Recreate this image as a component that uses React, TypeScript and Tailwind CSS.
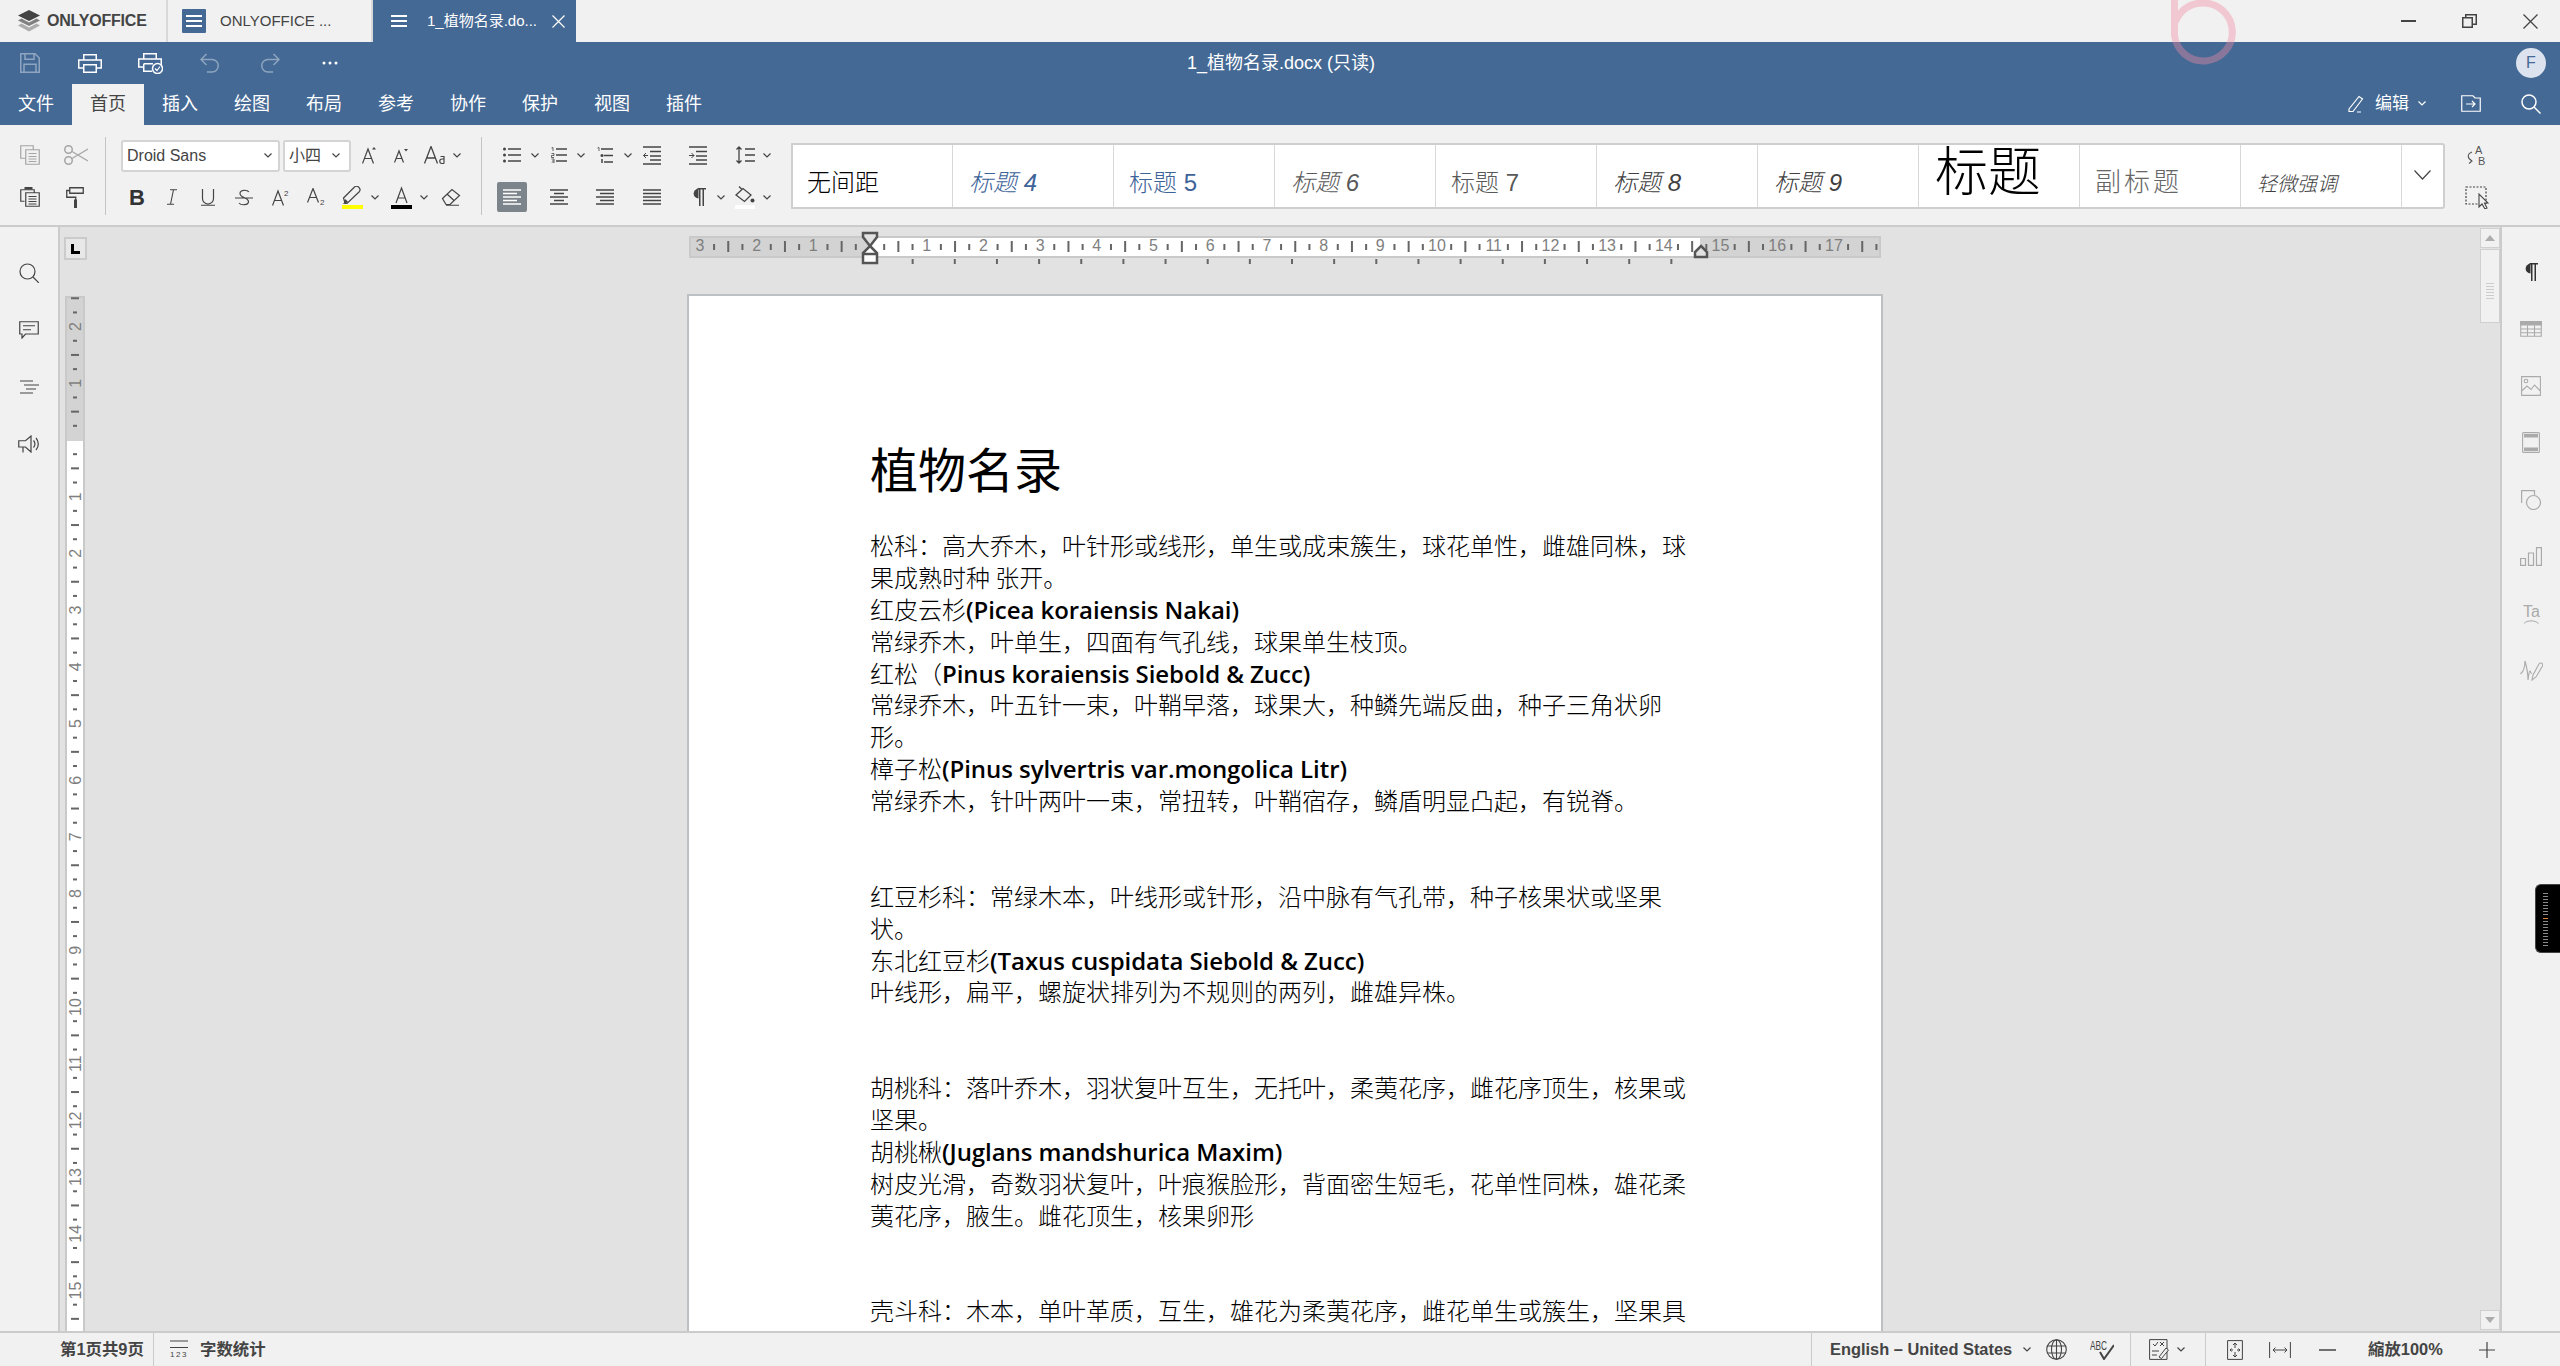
import type { ReactNode } from "react";

type DocLine = string | [string, string];

const docLines: DocLine[] = [
  "松科：高大乔木，叶针形或线形，单生或成束簇生，球花单性，雌雄同株，球",
  "果成熟时种 张开。",
  ["红皮云杉", "(Picea koraiensis Nakai)"],
  "常绿乔木，叶单生，四面有气孔线，球果单生枝顶。",
  ["红松（", "Pinus koraiensis Siebold & Zucc)"],
  "常绿乔木，叶五针一束，叶鞘早落，球果大，种鳞先端反曲，种子三角状卵",
  "形。",
  ["樟子松", "(Pinus sylvertris var.mongolica Litr)"],
  "常绿乔木，针叶两叶一束，常扭转，叶鞘宿存，鳞盾明显凸起，有锐脊。",
  "",
  "",
  "红豆杉科：常绿木本，叶线形或针形，沿中脉有气孔带，种子核果状或坚果",
  "状。",
  ["东北红豆杉", "(Taxus cuspidata Siebold & Zucc)"],
  "叶线形，扁平，螺旋状排列为不规则的两列，雌雄异株。",
  "",
  "",
  "胡桃科：落叶乔木，羽状复叶互生，无托叶，柔荑花序，雌花序顶生，核果或",
  "坚果。",
  ["胡桃楸", "(Juglans mandshurica Maxim)"],
  "树皮光滑，奇数羽状复叶，叶痕猴脸形，背面密生短毛，花单性同株，雄花柔",
  "荑花序，腋生。雌花顶生，核果卵形",
  "",
  "",
  "壳斗科：木本，单叶革质，互生，雄花为柔荑花序，雌花单生或簇生，坚果具",
];

const menuItems = ["文件", "首页", "插入", "绘图", "布局", "参考", "协作", "保护", "视图", "插件"];

function Ic({ w, h, className, children }: { w: number; h: number; className?: string; children: ReactNode }) {
  return (
    <svg
      width={w}
      height={h}
      viewBox={`0 0 ${w} ${h}`}
      fill="none"
      stroke="currentColor"
      strokeWidth={1.5}
      className={`block shrink-0 ${className ?? ""}`}
    >
      {children}
    </svg>
  );
}

function Chevron({ className }: { className?: string }) {
  return (
    <Ic w={8} h={5} className={className}>
      <path d="M.5.5 4 4 7.5.5" strokeWidth={1.2} />
    </Ic>
  );
}

function Lines({ ys, spans }: { ys: number[]; spans: [number, number][] }) {
  return (
    <>
      {ys.map((y, i) => (
        <path key={i} d={`M${spans[i % spans.length][0]} ${y}H${spans[i % spans.length][1]}`} />
      ))}
    </>
  );
}

function SideCell({ children }: { children: ReactNode }) {
  return <div className="flex h-[57px] w-full shrink-0 items-center justify-center">{children}</div>;
}

function PilcrowIcon({ className }: { className?: string }) {
  return (
    <Ic w={14} h={18} className={className}>
      <path d="M6.5.75A4.75 4.75 0 0 0 6.5 10.5Z" fill="currentColor" stroke="none" />
      <path d="M5.5.75H14M7.75.75V18M11.25.75V18" />
    </Ic>
  );
}

function Hamburger() {
  return (
    <Ic w={16} h={12} className="text-white">
      <path d="M0 1H16M0 6H16M0 11H16" strokeWidth={1.8} />
    </Ic>
  );
}

function TabBar() {
  return (
    <div className="flex h-[42px] shrink-0 bg-[#f1f1f1] text-[#444444]">
      <div className="flex w-[166px] items-center pl-[18px]">
        <svg width="22" height="22" viewBox="0 0 22 22" className="block shrink-0">
          <path d="M11 0 22 5.5 11 11 0 5.5Z" fill="#444444" />
          <path d="M3.5 8.5 11 12.5 18.5 8.5 22 10.5 11 16 0 10.5Z" fill="#808080" />
          <path d="M3.5 13.5 11 17.5 18.5 13.5 22 15.5 11 21.5 0 15.5Z" fill="#adadad" />
        </svg>
        <span className="ml-[7px] text-[16px] font-bold tracking-[-0.2px]">ONLYOFFICE</span>
      </div>
      <div className="flex w-[207px] items-center border-x-2 border-[#d8d8d8] pl-[14px]">
        <span className="flex h-[24px] w-[24px] items-center justify-center rounded-[1px] bg-[#446995]">
          <Hamburger />
        </span>
        <span className="ml-[14px] text-[15px]">ONLYOFFICE ...</span>
      </div>
      <div className="flex w-[203px] items-center bg-[#446995] pl-[18px] text-white">
        <Hamburger />
        <span className="ml-[20px] w-[125px] text-[15px] whitespace-nowrap">1_植物名录.do...</span>
        <Ic w={13} h={13}>
          <path d="M.5.5 12.5 12.5M12.5.5.5 12.5" strokeWidth={1.2} />
        </Ic>
      </div>
      <div className="flex-1" />
      <div className="flex items-center text-[#444444]">
        <Ic w={15} h={2}>
          <path d="M0 1H15" strokeWidth={2} />
        </Ic>
        <Ic w={15} h={14} className="ml-[46px]">
          <path d="M.75 3.75H10.25V13.25H.75ZM3.75 3.5V.75H14.25V10.25H10.5" />
        </Ic>
        <Ic w={15} h={15} className="mr-[22px] ml-[46px]">
          <path d="M.5.5 14.5 14.5M14.5.5.5 14.5" strokeWidth={1.3} />
        </Ic>
      </div>
    </div>
  );
}

function HeaderBar() {
  return (
    <div className="h-[83px] shrink-0 bg-[#446995] text-white">
      <div className="relative flex h-[42px] items-center">
        <Ic w={20} h={20} className="ml-[20px] opacity-40">
          <path d="M.75.75H15L19.25 5V19.25H.75ZM5 .75V6.25H14V.75M4 19V11.25H16V19" />
        </Ic>
        <Ic w={24} h={19} className="ml-[38px]">
          <path d="M5.75 6V.75H18.25V6M5.75 14H.75V6H23.25V14H18.25M5.75 10.75H18.25V18.25H5.75Z" />
        </Ic>
        <Ic w={25} h={21} className="ml-[36px]">
          <path d="M5.75 6V.75H18.25V6M5.75 14H.75V6H23.25V12M5.75 10.75H15M5.75 10.75V18.25H14" />
          <circle cx="19.5" cy="15.5" r="5" />
          <path d="M17 15.5 19 17.5 22 13.5" strokeWidth={1.2} />
        </Ic>
        <Ic w={20} h={20} className="ml-[37px] opacity-40">
          <path d="M6.5 1 1 6.5 6.5 12M1 6.5H12A6 6 0 0 1 12 19H7" />
        </Ic>
        <Ic w={20} h={20} className="ml-[40px] opacity-40">
          <path d="M13.5 1 19 6.5 13.5 12M19 6.5H8A6 6 0 0 0 8 19H13" />
        </Ic>
        <svg width="16" height="4" viewBox="0 0 16 4" className="ml-[42px] block shrink-0" fill="currentColor">
          <circle cx="2" cy="2" r="1.5" />
          <circle cx="8" cy="2" r="1.5" />
          <circle cx="14" cy="2" r="1.5" />
        </svg>
        <span className="absolute left-[1187px] text-[18px] whitespace-nowrap">1_植物名录.docx (只读)</span>
        <div className="flex-1" />
        <span className="mr-[14px] flex h-[30px] w-[30px] items-center justify-center rounded-full bg-[#dce3ee] text-[16px] text-[#446995]">
          F
        </span>
      </div>
      <div className="flex h-[41px]">
        {menuItems.map((item) => (
          <div
            key={item}
            className={`flex h-[41px] w-[72px] items-center justify-center text-[18px] ${item === "首页" ? "bg-[#f1f1f1] text-[#444444]" : ""}`}
          >
            {item}
          </div>
        ))}
        <div className="flex-1" />
        <div className="flex items-center pb-[2px]">
          <Ic w={18} h={19}>
            <path d="M1 15 11 2.5 14.5 5 5 17.5H1ZM9 18H13" strokeWidth={1.2} />
          </Ic>
          <span className="ml-[9px] text-[17px] leading-none">编辑</span>
          <Chevron className="ml-[9px]" />
          <Ic w={20} h={17} className="ml-[35px]">
            <path d="M.75.75H12L14 3H19.25V16.25H.75ZM5 9H14M11 6 14 9 11 12" strokeWidth={1.2} />
          </Ic>
          <Ic w={20} h={20} className="mr-[19px] ml-[40px]">
            <circle cx="8" cy="8" r="7" />
            <path d="M13 13 19.5 19.5" />
          </Ic>
        </div>
      </div>
    </div>
  );
}

function Toolbar() {
  return (
    <div className="flex h-[102px] shrink-0 border-b-2 border-[#cbcbcb] bg-[#f1f1f1] text-[#444444]">
      <div className="w-[105px] shrink-0 pt-[9px]">
        <div className="flex h-[42px] items-center text-[#a5a5a5]">
          <Ic w={20} h={20} className="ml-[20px]">
            <path d="M5 13.25H.75V.75H13.25V4.75M5.75 4.75H19.25V19.25H5.75ZM8.5 8.5H16.5M8.5 11.5H16.5M8.5 14H16.5M8.5 16.5H16.5" strokeWidth={1.2} />
          </Ic>
          <Ic w={24} h={20} className="ml-[24px]">
            <circle cx="4.5" cy="4.5" r="3.75" />
            <circle cx="4.5" cy="15.5" r="3.75" />
            <path d="M8 6.5 24 16M8 13.5 24 4" strokeWidth={1.2} />
          </Ic>
        </div>
        <div className="flex h-[42px] items-center">
          <Ic w={20} h={20} className="ml-[20px]">
            <path d="M4.5 14.25H.75V2.75H14.25V5.75M5.75 5.75H19.25V19.25H5.75ZM8.5 9.5H16.5M8.5 12H16.5M8.5 14.5H16.5M8.5 17H16.5" strokeWidth={1.2} />
            <path d="M4.5 1.25H12.5" strokeWidth={2.5} />
          </Ic>
          <Ic w={18} h={21} className="ml-[26px]">
            <path d="M3.75.75H17.25V6.25H3.75ZM3.5 3.5H.75V10.25H9.75V13" strokeWidth={1.3} />
            <rect x="8" y="12.5" width="3" height="8.5" fill="currentColor" stroke="none" />
          </Ic>
        </div>
      </div>
      <div className="mt-[12px] h-[78px] w-px shrink-0 bg-[#c4c4c4]" />

      <div className="w-[375px] shrink-0 pt-[9px]">
        <div className="flex h-[42px] items-center">
          <div className="mt-[1px] ml-[15px] flex h-[32px] w-[159px] items-center rounded-[3px] border-2 border-[#d4d4d4] bg-white pr-[6px] pl-[4px] text-[16px] text-[#444444]">
            <span className="flex-1">Droid Sans</span>
            <Chevron />
          </div>
          <div className="mt-[1px] ml-[3px] flex h-[32px] w-[68px] items-center rounded-[3px] border-2 border-[#d4d4d4] bg-white pr-[9px] pl-[4px] text-[16px]">
            <span className="flex-1">小四</span>
            <Chevron />
          </div>
          <Ic w={14} h={17} className="ml-[11px]">
            <path d="M.5 16.5 6 2 11.5 16.5M2.5 11.5H9.5" strokeWidth={1.2} />
            <path d="M10 2.5 12 0 14 2.5Z" fill="currentColor" stroke="none" />
          </Ic>
          <Ic w={14} h={14} className="mt-[2px] ml-[18px]">
            <path d="M.5 13.5 5 2 9.5 13.5M2.2 9.5H7.8" strokeWidth={1.2} />
            <path d="M10 0H14L12 2.5Z" fill="currentColor" stroke="none" />
          </Ic>
          <Ic w={23} h={18} className="ml-[16px]">
            <path d="M.5 17.5 7 .5 13.5 17.5M3 12H11" strokeWidth={1.3} />
            <path d="M16.5 10.5H20V17.5M20 13H18A2.25 2.25 0 0 0 18 17.5H20" strokeWidth={1.2} />
          </Ic>
          <Chevron className="ml-[6px]" />
        </div>
        <div className="flex h-[42px] items-center">
          <span className="mt-[2px] ml-[23px] w-[15px] text-[22px] leading-none font-bold text-[#333333]">B</span>
          <Ic w={10} h={16} className="ml-[23px]">
            <path d="M3 .75H10M0 15.25H7M6.5 .75 3.5 15.25" strokeWidth={1.1} />
          </Ic>
          <Ic w={14} h={17} className="ml-[24px]">
            <path d="M1.5 0V9.5A5.5 5.5 0 0 0 12.5 9.5V0M0 16.25H14" strokeWidth={1.2} />
          </Ic>
          <Ic w={18} h={17} className="ml-[20px]">
            <path d="M0 9H18M14 3C12 .5 5 .5 5 4.5C5 9 13.5 8.5 13.5 12.5C13.5 16.5 6 16.5 4 14" strokeWidth={1.2} />
          </Ic>
          <Ic w={17} h={17} className="ml-[19px]">
            <path d="M.5 16.5 6 2 11.5 16.5M2.5 11.5H9.5" strokeWidth={1.2} />
            <text x="12" y="7" fontSize="8" fill="currentColor" stroke="none">2</text>
          </Ic>
          <Ic w={18} h={19} className="mt-[1px] ml-[18px]">
            <path d="M.5 14.5 6 .5 11.5 14.5M2.5 9.5H9.5" strokeWidth={1.2} />
            <text x="13" y="17" fontSize="8" fill="currentColor" stroke="none">2</text>
          </Ic>
          <div className="ml-[17px] w-[21px]">
            <Ic w={21} h={18}>
              <path d="M3 17 1.5 12 12 1.5A2.5 2.5 0 0 1 17 6L6 16.5ZM1 18H6" strokeWidth={1.2} />
              <path d="M1.5 17.5 3.5 13 6 16Z" fill="currentColor" stroke="none" />
            </Ic>
            <div className="mt-[1px] h-[4px] bg-[#ffff00]" />
          </div>
          <Chevron className="ml-[8px]" />
          <div className="ml-[12px] w-[21px]">
            <Ic w={21} h={18}>
              <path d="M5 17 10.5 2 16 17M7 12H14" strokeWidth={1.2} />
            </Ic>
            <div className="mt-[1px] h-[4px] bg-black" />
          </div>
          <Chevron className="ml-[8px]" />
          <Ic w={20} h={18} className="ml-[13px]">
            <path d="M1.5 10.5 11 1.5 18.5 7.5 9 16.5H5ZM6 6 13 12.5M5 17.25H18" strokeWidth={1.2} />
          </Ic>
        </div>
      </div>
      <div className="mt-[12px] h-[78px] w-px shrink-0 bg-[#c4c4c4]" />

      <div className="w-[309px] shrink-0 pt-[9px]">
        <div className="flex h-[42px] items-center">
          <Ic w={18} h={16} className="ml-[21px]">
            <Lines ys={[2, 8, 14]} spans={[[5, 18]]} />
            <circle cx="1.5" cy="2" r="1.5" fill="currentColor" stroke="none" />
            <circle cx="1.5" cy="8" r="1.5" fill="currentColor" stroke="none" />
            <circle cx="1.5" cy="14" r="1.5" fill="currentColor" stroke="none" />
          </Ic>
          <Chevron className="ml-[10px]" />
          <Ic w={16} h={16} className="ml-[12px]">
            <Lines ys={[2, 8, 14]} spans={[[5, 16]]} />
            <path d="M.5 1 2 .5V4M.5 6.5H3V8.5H.5V10.5H3M.5 12H3V16H.5M1 14H3" strokeWidth={.8} />
          </Ic>
          <Chevron className="ml-[10px]" />
          <Ic w={16} h={16} className="ml-[12px]">
            <path d="M4 2H16M7 8.5H16M7 15H16" />
            <path d="M.5 1 2 .5V4" strokeWidth={.8} />
            <circle cx="5" cy="8.5" r="1.5" fill="currentColor" stroke="none" />
            <path d="M5 12V16" />
          </Ic>
          <Chevron className="ml-[11px]" />
          <Ic w={18} h={19} className="ml-[11px]">
            <Lines ys={[1, 5.5, 10, 14, 18]} spans={[[0, 18], [7, 18], [7, 18], [7, 18], [0, 18]]} />
            <path d="M5 9.5H.5M3 7 .5 9.5 3 12" strokeWidth={1} />
          </Ic>
          <Ic w={18} h={19} className="ml-[28px]">
            <Lines ys={[1, 5.5, 10, 14, 18]} spans={[[0, 18], [7, 18], [7, 18], [7, 18], [0, 18]]} />
            <path d="M0 9.5H5M2.5 7 5 9.5 2.5 12" strokeWidth={1} />
          </Ic>
          <Ic w={20} h={18} className="ml-[28px]">
            <path d="M4 1V17M1.5 3.5 4 1 6.5 3.5M1.5 14.5 4 17 6.5 14.5M10 3H20M10 9H20M10 15H20" strokeWidth={1.3} />
          </Ic>
          <Chevron className="ml-[8px]" />
        </div>
        <div className="flex h-[42px] items-center">
          <div className="ml-[15px] flex h-[30px] w-[30px] items-center justify-center rounded-[2px] bg-[#7d858c] text-white">
            <Ic w={18} h={16}>
              <Lines ys={[1, 4.5, 8, 11.5, 15]} spans={[[0, 18], [0, 14], [0, 18], [0, 14], [0, 18]]} />
            </Ic>
          </div>
          <Ic w={18} h={16} className="ml-[23px]">
            <Lines ys={[1, 4.5, 8, 11.5, 15]} spans={[[0, 18], [4, 14], [0, 18], [4, 14], [0, 18]]} />
          </Ic>
          <Ic w={18} h={16} className="ml-[28px]">
            <Lines ys={[1, 4.5, 8, 11.5, 15]} spans={[[0, 18], [4, 18], [0, 18], [4, 18], [0, 18]]} />
          </Ic>
          <Ic w={18} h={16} className="ml-[29px]">
            <Lines ys={[1, 4.5, 8, 11.5, 15]} spans={[[0, 18]]} />
          </Ic>
          <PilcrowIcon className="ml-[31px]" />
          <Chevron className="ml-[11px]" />
          <div className="ml-[10px] w-[20px]">
            <Ic w={20} h={18}>
              <path d="M1 9 8 2.5 16 9 9.5 15.5ZM4 .5 7 3.5" strokeWidth={1.3} />
              <circle cx="17.5" cy="14.5" r="2" fill="currentColor" stroke="none" />
            </Ic>
            <div className="mt-[1px] h-[4px] bg-white" />
          </div>
          <Chevron className="ml-[8px]" />
        </div>
      </div>

      <div className="mt-[18px] flex h-[66px] w-[1654px] shrink-0 rounded-r-[3px] border-2 border-[#cfcfcf] bg-white text-[24px] font-light whitespace-nowrap">
        <div className="flex w-[160px] items-center border-r border-[#d8d8d8] pt-[14px] pl-[14px] text-black">无间距</div>
        <div className="flex w-[161px] items-center border-r border-[#d8d8d8] pt-[14px] pl-[16px] text-[#3d6399] italic">标题 4</div>
        <div className="flex w-[161px] items-center border-r border-[#d8d8d8] pt-[14px] pl-[15px] text-[#3d6399]">标题 5</div>
        <div className="flex w-[161px] items-center border-r border-[#d8d8d8] pt-[14px] pl-[16px] text-[#595959] italic">标题 6</div>
        <div className="flex w-[161px] items-center border-r border-[#d8d8d8] pt-[14px] pl-[15px] text-[#595959]">标题 7</div>
        <div className="flex w-[161px] items-center border-r border-[#d8d8d8] pt-[14px] pl-[16px] text-[#404040] italic">标题 8</div>
        <div className="flex w-[161px] items-center border-r border-[#d8d8d8] pt-[14px] pl-[16px] text-[#404040] italic">标题 9</div>
        <div className="flex w-[161px] items-center border-r border-[#d8d8d8] pb-[8px] pl-[16px] text-[53px] leading-none text-black">标题</div>
        <div className="flex w-[161px] items-center border-r border-[#d8d8d8] pt-[12px] pl-[15px] text-[26px] tracking-[3px] text-[#666666]">副标题</div>
        <div className="flex w-[161px] items-center border-r border-[#d8d8d8] pt-[16px] pl-[16px] text-[20px] text-[#404040] italic">轻微强调</div>
        <div className="flex flex-1 items-center justify-center pb-[2px]">
          <Ic w={17} h={10}>
            <path d="M.5.5 8.5 9 16.5.5" strokeWidth={1.2} />
          </Ic>
        </div>
      </div>

      <div className="ml-[20px] pt-[9px]">
        <div className="flex h-[42px] items-center">
          <Ic w={22} h={21} className="text-[#555555]">
            <path d="M7 7C2 9 2 13 7 16M4 13.5 7 16 4 18.5" strokeWidth={1.1} />
            <text x="10" y="9" fontSize="11" fill="currentColor" stroke="none">A</text>
            <text x="13" y="20" fontSize="11" fill="currentColor" stroke="none">B</text>
          </Ic>
        </div>
        <div className="flex h-[42px] items-center">
          <Ic w={24} h={23} className="text-[#444444]">
            <path d="M1 1H21V18H1Z" strokeWidth={1.2} strokeDasharray="2 1.5" />
            <path d="M14 8V21L17 18L20 23L22 22L19.5 17H23Z" fill="#f1f1f1" strokeWidth={1.1} />
          </Ic>
        </div>
      </div>
    </div>
  );
}

function HorizontalRuler() {
  const cm = 56.7;
  const ticks = [];
  for (let i = -12; i <= 71; i++) {
    const x = 181 + (i * cm) / 4;
    if (i === 0) continue;
    if (i % 4 === 0) {
      ticks.push(
        <text key={i} x={x} y={20} textAnchor="middle" fontSize="16" fill="#7f7f7f" stroke="none">
          {Math.abs(i / 4)}
        </text>
      );
    } else {
      const tall = i % 2 === 0;
      ticks.push(<rect key={i} x={x - 1} y={tall ? 10 : 13} width={2} height={tall ? 11 : 6} fill="#666666" stroke="none" />);
    }
  }
  const stops = [];
  for (let i = 1; i <= 19; i++) {
    stops.push(<rect key={i} x={181 + i * 42.15 - 1 + 0.5} y={28} width={2} height={5} fill="#666666" />);
  }
  return (
    <svg width="1192" height="34" viewBox="0 0 1192 34" className="block shrink-0">
      <rect x="0" y="5" width="1192" height="22" fill="#c9c9c9" />
      <rect x="2" y="7" width="1188" height="18" fill="#d3d3d3" />
      <rect x="181" y="7" width="830" height="18" fill="#ffffff" />
      {ticks}
      {stops}
      <path d="M174 2H188V6L181 15L174 6Z" fill="#e2e2e2" stroke="#555555" strokeWidth="2.5" />
      <path d="M181 15 188 22V32H174V22Z" fill="#ffffff" stroke="#555555" strokeWidth="2.5" />
      <path d="M174 23H188" stroke="#555555" strokeWidth="2.5" />
      <path d="M1012 15 1018 21V26H1006V21Z" fill="#e2e2e2" stroke="#555555" strokeWidth="2.5" />
    </svg>
  );
}

function VerticalRuler() {
  const cm = 56.7;
  const zero = 144;
  const ticks = [];
  for (let i = -10; i <= 62; i++) {
    const y = zero + (i * cm) / 4;
    if (i === 0) continue;
    if (i % 4 === 0) {
      ticks.push(
        <text key={i} x={0} y={0} transform={`translate(15.5 ${y}) rotate(-90)`} textAnchor="middle" fontSize="16" fill="#7f7f7f">
          {Math.abs(i / 4)}
        </text>
      );
    } else {
      const tall = i % 2 === 0;
      ticks.push(<rect key={i} x={tall ? 6 : 8} y={y - 1} width={tall ? 8 : 4} height={2} fill="#666666" />);
    }
  }
  return (
    <svg width="20" height="1040" viewBox="0 0 20 1040" className="block shrink-0">
      <rect width="20" height="1040" fill="#c9c9c9" />
      <rect x="2" y="2" width="16" height="1038" fill="#d3d3d3" />
      <rect x="2" y="145" width="16" height="895" fill="#ffffff" />
      {ticks}
    </svg>
  );
}

function DocPage() {
  return (
    <div className="mt-[29px] -ml-[2px] h-[1600px] w-[1196px] shrink-0 border-2 border-[#bdc0c2] bg-white pt-[139px] pl-[181px] font-['Noto_Sans_CJK_SC',sans-serif] text-black">
      <div className="h-[64px] text-[48px] leading-[64px]">植物名录</div>
      <div className="mt-[30px] text-[24px] leading-[31.9px] font-light whitespace-nowrap">
        {docLines.map((line, i) => (
          <div key={i} className="h-[31.9px]">
            {typeof line === "string" ? (
              line
            ) : (
              <>
                {line[0]}
                <span className="font-['Open_Sans',sans-serif] font-semibold tracking-[-0.06px]">{line[1]}</span>
              </>
            )}
          </div>
        ))}
      </div>
    </div>
  );
}

function LeftSide() {
  return (
    <div className="flex w-[60px] shrink-0 flex-col border-r-2 border-[#cbcbcb] bg-[#f1f1f1] pt-[17px] pr-[1px] text-[#444444]">
      <SideCell>
        <Ic w={20} h={20}>
          <circle cx="8.5" cy="8.5" r="7.5" strokeWidth={1.2} />
          <path d="M14 14 20 20" strokeWidth={1.2} />
        </Ic>
      </SideCell>
      <SideCell>
        <Ic w={20} h={18}>
          <path d="M.75.75H19.25V13H6.5L3 17V13H.75ZM4 4.75H16M4 8.75H12" strokeWidth={1.2} />
        </Ic>
      </SideCell>
      <SideCell>
        <Ic w={20} h={14}>
          <path d="M1 1H14M5 5H20M7 9H17M1 13H14" strokeWidth={1.2} />
        </Ic>
      </SideCell>
      <SideCell>
        <Ic w={22} h={18}>
          <path d="M.75 5.75H7.5L13 1V17L7.5 12H.75ZM5 12V17.5M15.5 5.5A5 5 0 0 1 15.5 12.5M18 3A9 9 0 0 1 18 15" strokeWidth={1.2} />
        </Ic>
      </SideCell>
    </div>
  );
}

function RightSide() {
  return (
    <div className="flex w-[58px] shrink-0 flex-col bg-[#f1f1f1] pt-[16px] text-[#aaaaaa]">
      <SideCell>
        <PilcrowIcon className="text-[#333333]" />
      </SideCell>
      <SideCell>
        <Ic w={22} h={16}>
          <path d="M.75.75H21.25V15.25H.75ZM.75 8H21.25M.75 11.75H21.25M7.5 4.5V15.25M14.5 4.5V15.25" strokeWidth={1.1} />
          <rect x="0" y="0" width="22" height="4.5" fill="currentColor" stroke="none" />
        </Ic>
      </SideCell>
      <SideCell>
        <Ic w={20} h={20}>
          <path d="M.6.6H19.4V19.4H.6ZM.6 15 6 10 10 13.5 13.5 9 19.4 15" strokeWidth={1.1} />
          <circle cx="5" cy="5" r="1.8" strokeWidth={1.1} />
        </Ic>
      </SideCell>
      <SideCell>
        <Ic w={18} h={21}>
          <rect x=".6" y=".6" width="16.8" height="19.8" rx="1" strokeWidth={1.1} />
          <rect x="2" y="2" width="14" height="3.5" fill="currentColor" stroke="none" />
          <rect x="2" y="15.5" width="14" height="3.5" fill="currentColor" stroke="none" />
        </Ic>
      </SideCell>
      <SideCell>
        <Ic w={20} h={20}>
          <path d="M.6 13V.6H13.5V5" strokeWidth={1.2} />
          <circle cx="12.5" cy="12.5" r="7" strokeWidth={1.2} />
        </Ic>
      </SideCell>
      <SideCell>
        <Ic w={22} h={19}>
          <path d="M.6 11.5H5.5V18.4H.6ZM8.5 6H13.5V18.4H8.5ZM16.5.6H21.4V18.4H16.5Z" strokeWidth={1.2} />
        </Ic>
      </SideCell>
      <SideCell>
        <Ic w={17} h={20}>
          <text x="0" y="13" fontSize="16" fill="currentColor" stroke="none" fontWeight="300">Ta</text>
          <path d="M1 19.5C4 16 12 16 15.5 19.5" strokeWidth={1} />
        </Ic>
      </SideCell>
      <SideCell>
        <Ic w={23} h={21}>
          <path d="M.5 14C3 12 5 8 5 1C7 8 8 15 8 20C9 14 9 11 10 11C11 11 10 14 12 13" strokeWidth={1.1} />
          <path d="M12 20 13 15 19 4A2 2 0 0 1 22.5 6L16 17Z" strokeWidth={1.1} />
        </Ic>
      </SideCell>
    </div>
  );
}

function Scrollbar() {
  return (
    <div className="flex w-[22px] shrink-0 flex-col border-r-2 border-[#cbcbcb] bg-[#e2e2e2] pt-[1px]">
      <div className="flex h-[20px] w-[20px] items-center justify-center border border-[#d0d0d0] bg-[#f1f1f1]">
        <div className="h-0 w-0 border-x-[5px] border-b-[6px] border-x-transparent border-b-[#adadad]" />
      </div>
      <div className="mt-[1px] flex h-[74px] w-[20px] flex-col items-center justify-center gap-[2px] border border-[#d0d0d0] bg-[#f1f1f1] pt-[10px]">
        {[0, 1, 2, 3, 4, 5].map((i) => (
          <div key={i} className="h-px w-[8px] bg-[#cccccc]" />
        ))}
      </div>
      <div className="flex-1" />
      <div className="mb-[1px] flex h-[20px] w-[20px] items-center justify-center border border-[#d0d0d0] bg-[#f1f1f1]">
        <div className="h-0 w-0 border-x-[5px] border-t-[6px] border-x-transparent border-t-[#adadad]" />
      </div>
    </div>
  );
}

function StatusBar() {
  return (
    <div className="flex h-[35px] shrink-0 items-center border-t-2 border-[#cbcbcb] bg-[#f1f1f1] text-[16.4px] font-bold whitespace-nowrap text-[#444444]">
      <div className="flex h-full w-[154px] items-center border-r border-[#cbcbcb] pl-[60px]">第1页共9页</div>
      <Ic w={18} h={20} className="ml-[16px]">
        <path d="M0 1H18M0 7.5H18" strokeWidth={1.1} />
        <text x="0" y="17" fontSize="8" fontWeight="400" letterSpacing="1.5" fill="currentColor" stroke="none">123</text>
      </Ic>
      <span className="ml-[12px]">字数统计</span>
      <div className="flex-1" />
      <div className="flex h-full w-[749px] shrink-0 items-center border-l border-[#cbcbcb] pl-[18px]">
        <span className="w-[185px]">English – United States</span>
        <Chevron className="ml-[8px]" />
        <Ic w={21} h={21} className="ml-[15px]">
          <circle cx="10.5" cy="10.5" r="9.8" strokeWidth={1.1} />
          <ellipse cx="10.5" cy="10.5" rx="5" ry="9.8" strokeWidth={1.1} />
          <path d="M10.5 .7V20.3M1 7H20M1 14H20" strokeWidth={1.1} />
        </Ic>
        <Ic w={24} h={20} className="ml-[23px]">
          <text x="0" y="10" fontSize="12" fontWeight="400" textLength="17" lengthAdjust="spacingAndGlyphs" fill="currentColor" stroke="none">ABC</text>
          <path d="M10 12 14 19 24 5" strokeWidth={2} />
        </Ic>
        <div className="ml-[16px] h-full w-px bg-[#cbcbcb]" />
        <Ic w={20} h={21} className="ml-[18px]">
          <path d="M.6.6H18V20.4H.6ZM3 12H10M3 16H8M4 5 6 7 9 3M11 3 15 7M15 3 11 7" strokeWidth={1} />
          <path d="M10 18 17 9 19.5 11 12.5 19.5Z" fill="#f1f1f1" strokeWidth={1} />
        </Ic>
        <Chevron className="ml-[8px]" />
        <div className="ml-[20px] h-full w-px bg-[#cbcbcb]" />
        <Ic w={16} h={20} className="ml-[21px]">
          <path d="M.6.6H15.4V19.4H.6ZM8 3V8M6 5 8 3 10 5M8 12V17M6 15 8 17 10 15M3 10H6M4.5 8.5 3 10 4.5 11.5M10 10H13M11.5 8.5 13 10 11.5 11.5" strokeWidth={1} />
        </Ic>
        <Ic w={22} h={16} className="ml-[26px]">
          <path d="M.6 0V16M21.4 0V16M4 8H18M6.5 5.5 4 8 6.5 10.5M15.5 5.5 18 8 15.5 10.5" strokeWidth={1} />
        </Ic>
        <Ic w={17} h={2} className="ml-[28px]">
          <path d="M0 1H17" />
        </Ic>
        <span className="ml-[32px] w-[80px] font-['Liberation_Sans','Noto_Sans_CJK_TC',sans-serif]">縮放100%</span>
        <Ic w={16} h={16} className="ml-[31px]">
          <path d="M0 8H16M8 0V16" strokeWidth={1.2} />
        </Ic>
      </div>
    </div>
  );
}

export default function App() {
  return (
    <div className="relative flex h-[1366px] w-[2560px] flex-col overflow-hidden bg-[#f1f1f1] font-['Liberation_Sans','Noto_Sans_CJK_SC',sans-serif]">
      <TabBar />
      <HeaderBar />
      <Toolbar />
      <div className="flex min-h-0 flex-1">
        <LeftSide />
        <div className="flex min-w-0 flex-1 overflow-hidden bg-[#e2e2e2]">
          <div className="flex w-[629px] shrink-0 flex-col pt-[10px] pl-[4px]">
            <div className="flex h-[23px] w-[23px] shrink-0 items-center justify-center border-2 border-[#cbcbcb] bg-[#e8e8e8]">
              <svg width="9" height="10" viewBox="0 0 9 10" className="block">
                <path d="M0 0H3V7H9V10H0Z" fill="#000000" />
              </svg>
            </div>
            <div className="mt-[36px] ml-[1px] shrink-0">
              <VerticalRuler />
            </div>
          </div>
          <div className="flex w-[1192px] shrink-0 flex-col pt-[4px]">
            <HorizontalRuler />
            <DocPage />
          </div>
        </div>
        <Scrollbar />
        <RightSide />
      </div>
      <StatusBar />

      <svg width="80" height="70" viewBox="0 0 80 70" className="pointer-events-none absolute top-0 left-[2165px]">
        <path d="M9.5 0V35A29 29 0 1 0 38 3C26 3 16 9 10 22" fill="none" stroke="#f28da6" strokeOpacity=".4" strokeWidth="7" />
      </svg>

      <div className="absolute top-[884px] left-[2535px] flex h-[69px] w-[25px] flex-col items-center gap-[1px] rounded-l-[6px] border-y border-l border-[#444444] bg-black pt-[8px] pr-[5px]">
        {[0, 1, 2, 3, 4, 5, 6, 7, 8, 9, 10, 11, 12, 13, 14, 15, 16, 17].map((i) => (
          <div key={i} className={`h-px w-[5px] ${i === 8 ? "my-[1px] bg-[#e08a2c]" : "mb-[1px] bg-[#8a8a8a]"}`} />
        ))}
      </div>
    </div>
  );
}
